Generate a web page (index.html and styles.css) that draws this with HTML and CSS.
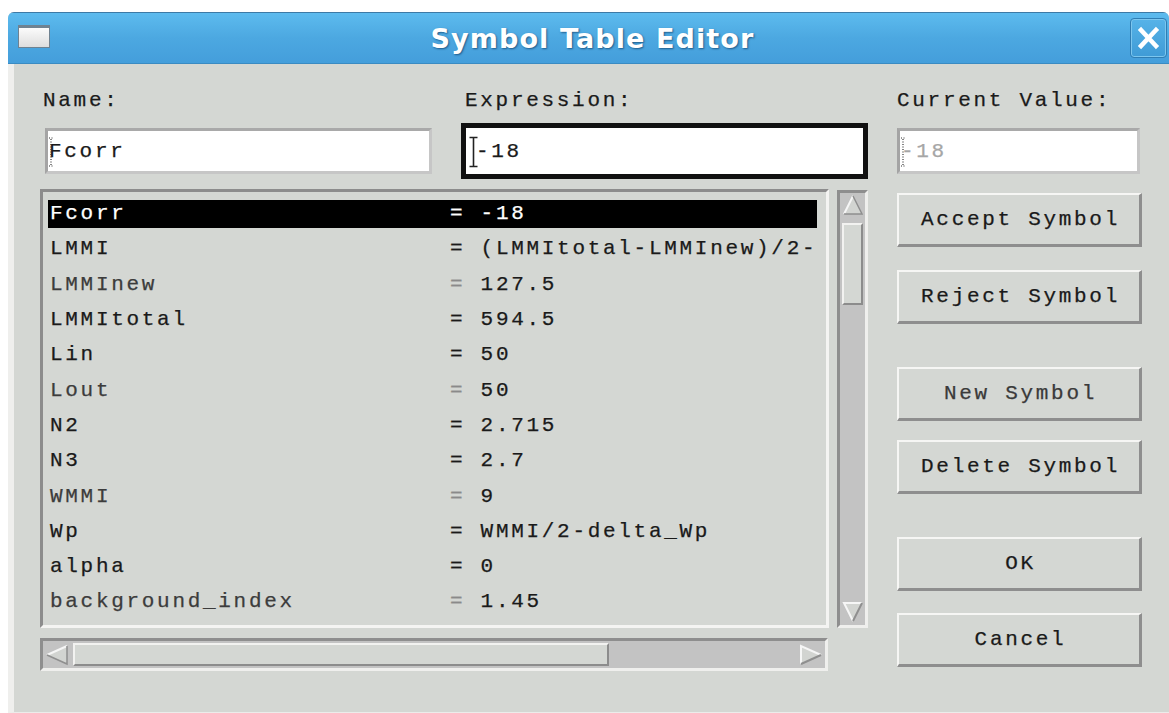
FILE: index.html
```html
<!DOCTYPE html>
<html lang="en">
<head>
<meta charset="utf-8">
<title>Symbol Table Editor</title>
<link rel="stylesheet" href="styles.css">
</head>
<body>
<div class="window">
  <div class="titlebar">
    <span class="win-icon"></span>
    <span class="title">Symbol Table Editor</span>
    <span class="close">
      <svg width="37" height="40" viewBox="0 0 37 40"><path d="M11 12 L26 28 M26 12 L11 28" stroke="#fff" stroke-width="4.5" stroke-linecap="square"/></svg>
    </span>
  </div>
  <div class="body">
    <div class="fields">
      <div class="field f-name">
        <div class="label">Name:</div>
        <div class="entry">
          <svg class="caret" width="6" height="30" viewBox="0 0 6 30"><path d="M1 1h4M3 2v26M1 29h4" stroke="#333" stroke-width="1.2" stroke-dasharray="1 1.5" fill="none"/></svg>
          <span>Fcorr</span>
        </div>
      </div>
      <div class="field f-expr">
        <div class="label">Expression:</div>
        <div class="entry focus">
          <svg class="caret solid" width="9" height="32" viewBox="0 0 9 32"><path d="M0.5 1.5h8M4.5 1.5v29M0.5 30.5h8" stroke="#222" stroke-width="1.6" fill="none"/></svg>
          <span>-18</span>
        </div>
      </div>
      <div class="field f-cur">
        <div class="label">Current Value:</div>
        <div class="entry readonly">
          <svg class="caret" width="6" height="30" viewBox="0 0 6 30"><path d="M1 1h4M3 2v26M1 29h4" stroke="#333" stroke-width="1.2" stroke-dasharray="1 1.5" fill="none"/></svg>
          <span>-18</span>
        </div>
      </div>
    </div>

    <div class="main">
      <div class="listcol">
        <div class="listwrap">
          <div class="listbox">
            <div class="row sel"><div class="line"><span>Fcorr</span><span>= -18</span></div></div>
            <div class="row"><div class="line"><span>LMMI</span><span>= (LMMItotal-LMMInew)/2-</span></div></div>
            <div class="row dim"><div class="line"><span>LMMInew</span><span><b class="eq">=</b> 127.5</span></div></div>
            <div class="row"><div class="line"><span>LMMItotal</span><span>= 594.5</span></div></div>
            <div class="row"><div class="line"><span>Lin</span><span>= 50</span></div></div>
            <div class="row dim"><div class="line"><span>Lout</span><span><b class="eq">=</b> 50</span></div></div>
            <div class="row"><div class="line"><span>N2</span><span>= 2.715</span></div></div>
            <div class="row"><div class="line"><span>N3</span><span>= 2.7</span></div></div>
            <div class="row dim"><div class="line"><span>WMMI</span><span><b class="eq">=</b> 9</span></div></div>
            <div class="row"><div class="line"><span>Wp</span><span>= WMMI/2-delta_Wp</span></div></div>
            <div class="row"><div class="line"><span>alpha</span><span>= 0</span></div></div>
            <div class="row dim"><div class="line"><span>background_index</span><span><b class="eq">=</b> 1.45</span></div></div>
          </div>
          <div class="vscroll">
            <svg class="arrow" width="22" height="22" viewBox="0 0 22 22">
              <polygon points="11,2 20,20 2,20" fill="#d2d4d1"/>
              <polyline points="2,20 11,2" stroke="#f6f6f6" stroke-width="2" fill="none"/>
              <polyline points="11,2 20,20 2,20" stroke="#8f8f8f" stroke-width="1.5" fill="none"/>
            </svg>
            <div class="vthumb"></div>
            <div class="vspace"></div>
            <svg class="arrow" width="22" height="22" viewBox="0 0 22 22">
              <polygon points="2,2 20,2 11,20" fill="#d2d4d1"/>
              <polyline points="20,2 2,2 11,20" stroke="#f6f6f6" stroke-width="2" fill="none"/>
              <polyline points="20,2 11,20" stroke="#8f8f8f" stroke-width="2" fill="none"/>
            </svg>
          </div>
        </div>
        <div class="hscroll">
          <svg class="arrow" width="24" height="22" viewBox="0 0 24 22">
            <polygon points="2,11 22,2 22,20" fill="#d2d4d1"/>
            <polyline points="22,2 2,11" stroke="#f6f6f6" stroke-width="2" fill="none"/>
            <polyline points="2,11 22,20 22,2" stroke="#8f8f8f" stroke-width="1.5" fill="none"/>
          </svg>
          <div class="hthumb"></div>
          <div class="hspace"></div>
          <svg class="arrow" width="24" height="22" viewBox="0 0 24 22">
            <polygon points="2,2 22,11 2,20" fill="#d2d4d1"/>
            <polyline points="2,20 2,2 22,11" stroke="#f6f6f6" stroke-width="2" fill="none"/>
            <polyline points="22,11 2,20" stroke="#8f8f8f" stroke-width="2" fill="none"/>
          </svg>
        </div>
      </div>

      <div class="buttons">
        <div class="btn b-accept">Accept Symbol</div>
        <div class="btn b-reject">Reject Symbol</div>
        <div class="btn b-new dimtext">New Symbol</div>
        <div class="btn b-delete">Delete Symbol</div>
        <div class="btn b-ok">OK</div>
        <div class="btn b-cancel">Cancel</div>
      </div>
    </div>
  </div>
</div>
</body>
</html>
```

FILE: styles.css
```css
* { box-sizing: border-box; }

body {
  margin: 0;
  background: #ffffff;
  font-family: "Liberation Mono", "DejaVu Sans Mono", monospace;
  font-size: 21px;
  letter-spacing: 2.7px;
  color: #1a1a1a;
  -webkit-text-stroke: 0.25px currentColor;
}

/* dialog frame */
.window {
  margin: 12px 0 0 8px;
  width: 1161px;
  height: 701px;
  display: flex;
  flex-direction: column;
  background: #d4d7d3;
  border-radius: 6px 6px 0 0;
  overflow: hidden;
}

.titlebar {
  position: relative;
  flex: none;
  height: 52px;
  display: flex;
  align-items: center;
  justify-content: center;
  background: linear-gradient(#5dbbee, #4ca8e1 50%, #449edb);
  border-top: 1px solid #3d7aa6;
  border-bottom: 1px solid #3a8bc2;
}

.win-icon {
  position: absolute;
  left: 10px;
  top: 12px;
  width: 32px;
  height: 23px;
  border: 1px solid #6f8291;
  border-top-width: 3px;
  background: linear-gradient(#fbfbfb, #dedede);
}

.title {
  font-family: "DejaVu Sans", sans-serif;
  font-weight: bold;
  font-size: 27px;
  letter-spacing: 1.1px;
  color: #ffffff;
  -webkit-text-stroke: 0;
  text-shadow: 1px 1px 2px rgba(0, 40, 80, 0.6);
  margin-left: 8px;
}

.close {
  position: absolute;
  right: 2px;
  top: 5px;
  width: 37px;
  height: 40px;
  border-radius: 4px;
  border: 1px solid #2f7db3;
  box-shadow: inset 0 0 0 1px #7cc6ee;
  background: linear-gradient(#56b3e8, #3f9bd6);
}
.close svg { display: block; margin: -1px 0 0 -1px; }

/* client area */
.body {
  flex: 1;
  border-left: 6px solid #efefed;
  border-bottom: 1px solid #ececea;
  padding: 25px 27px 0 26px;
}

.fields {
  display: flex;
  align-items: flex-start;
}

.field .label {
  height: 24px;
  line-height: 24px;
  white-space: nowrap;
}

.f-name { margin-left: 5px; width: 387px; }
.f-name .label { margin-left: -2px; }
.f-expr { margin-left: 29px; width: 407px; }
.f-expr .label { padding-left: 4px; }
.f-cur { margin-left: 29px; width: 243px; }

.entry {
  position: relative;
  margin-top: 15px;
  height: 46px;
  background: #ffffff;
  border: 3px solid;
  border-color: #a9a9a9 #c6c6c6 #c6c6c6 #a4a4a4;
  display: flex;
  align-items: center;
  padding-left: 1px;
  white-space: nowrap;
}
.entry .caret {
  position: absolute;
  left: 0;
  top: 6px;
}
.entry.focus {
  margin-top: 10px;
  height: 56px;
  border: 5px solid #111111;
  padding-left: 10px;
}
.entry.focus .caret { left: 3px; top: 8px; }
.entry.readonly { color: #a6a6a6; }

/* symbol list and its scrollbars */
.main {
  display: flex;
  margin-top: 10px;
}

.listcol { width: 828px; }

.listwrap { display: flex; }

.listbox {
  width: 789px;
  height: 439px;
  border: 3px solid;
  border-color: #8c8c8c #f4f4f2 #f4f4f2 #8c8c8c;
  padding: 4px 0 0 5px;
  overflow: hidden;
}

.row {
  height: 35.3px;
  display: flex;
  align-items: center;
}
.row .line {
  width: 769px;
  height: 28px;
  display: grid;
  grid-template-columns: 400px 1fr;
  align-items: center;
  padding-left: 2px;
  white-space: nowrap;
  overflow: hidden;
}
.row.sel .line { background: #000000; color: #ffffff; }
.row.dim .line > span:first-child { color: #3c3c3c; }
.row .eq { font-weight: normal; color: #8a8a8a; }

.vscroll {
  margin: 1px 0 0 8px;
  width: 31px;
  height: 438px;
  background: #c3c3c3;
  border: 3px solid;
  border-color: #8e8e8e #efefed #efefed #8e8e8e;
  display: flex;
  flex-direction: column;
  align-items: center;
  padding: 1px 0 2px;
}
.vscroll .arrow { flex: none; display: block; }
.vthumb {
  margin-top: 7px;
  width: 21px;
  height: 82px;
  background: #d4d7d3;
  border: 2px solid;
  border-color: #f2f2f0 #8c8c8c #8c8c8c #f2f2f0;
}
.vspace { flex: 1; }

.hscroll {
  margin-top: 10px;
  width: 788px;
  height: 33px;
  background: #c3c3c3;
  border: 3px solid;
  border-color: #8e8e8e #efefed #efefed #8e8e8e;
  display: flex;
  align-items: center;
  padding: 0 2px 0 2px;
}
.hscroll .arrow { flex: none; display: block; }
.hthumb {
  margin-left: 4px;
  width: 536px;
  height: 23px;
  background: #d4d7d3;
  border: 2px solid;
  border-color: #f2f2f0 #8c8c8c #8c8c8c #f2f2f0;
}
.hspace { flex: 1; }

/* action buttons */
.buttons {
  margin-left: 29px;
  width: 245px;
  padding-top: 4px;
  display: flex;
  flex-direction: column;
}

.btn {
  height: 54px;
  display: flex;
  align-items: center;
  justify-content: center;
  padding-left: 3px;
  background: #d4d7d3;
  border-style: solid;
  border-width: 2px 3px 3px 2px;
  border-color: #f6f6f4 #8e8e8e #8e8e8e #f6f6f4;
  white-space: nowrap;
}
.b-reject { margin-top: 23px; }
.b-new { margin-top: 43px; }
.b-delete { margin-top: 19px; }
.b-ok { margin-top: 43px; }
.b-cancel { margin-top: 22px; }
.btn.dimtext { color: #3a3a3a; }
```
